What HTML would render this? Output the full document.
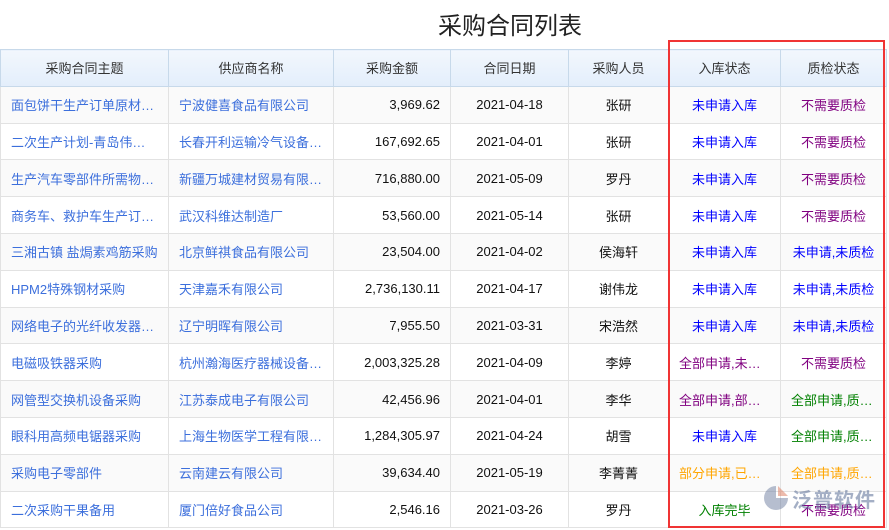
<!DOCTYPE html>
<html><head><meta charset="utf-8">
<style>
body{margin:0;width:889px;height:530px;background:#fff;font-family:"Liberation Sans","Noto Sans CJK SC",sans-serif;font-size:13px;position:relative;overflow:hidden}
h1{position:absolute;left:0;width:1020px;top:6px;margin:0;text-align:center;font-size:24px;font-weight:normal;color:#222}
table{position:absolute;left:0;top:49px;width:886px;border-collapse:collapse;table-layout:fixed}
td,th{height:35.8px;border:1px solid #e2e2e2;padding:0 10px;white-space:nowrap;overflow:hidden;text-overflow:ellipsis;text-align:center}
th{background:linear-gradient(#f2f7fd,#e3eefb);font-weight:normal;color:#333;border-color:#c7d9ea}
tr:nth-child(even) td{background:#fafafa}
td.l{text-align:left;color:#3c6fdc}
td.r{text-align:right}
td{color:#111}
.b{color:#0000ff!important}.p{color:#800080!important}.g{color:#008000!important}.o{color:#ffa500!important}
.box{position:absolute;left:668px;top:40px;width:213px;height:484px;border:2px solid #f03434}
.wm{position:absolute;left:792px;top:484px;font-size:20px;color:rgba(90,110,150,.55);font-weight:bold;letter-spacing:1px}
</style></head><body>
<h1>采购合同列表</h1>
<table>
<colgroup><col style="width:168px"><col style="width:165px"><col style="width:117px"><col style="width:118px"><col style="width:100px"><col style="width:112px"><col style="width:106px"></colgroup>
<tr><th>采购合同主题</th><th>供应商名称</th><th>采购金额</th><th>合同日期</th><th>采购人员</th><th>入库状态</th><th>质检状态</th></tr>
<tr><td class="l">面包饼干生产订单原材料采购</td><td class="l">宁波健喜食品有限公司</td><td class="r">3,969.62</td><td>2021-04-18</td><td>张研</td><td class="b">未申请入库</td><td class="p">不需要质检</td></tr>
<tr><td class="l">二次生产计划-青岛伟业采购</td><td class="l">长春开利运输冷气设备有限公司</td><td class="r">167,692.65</td><td>2021-04-01</td><td>张研</td><td class="b">未申请入库</td><td class="p">不需要质检</td></tr>
<tr><td class="l">生产汽车零部件所需物料采购</td><td class="l">新疆万城建材贸易有限公司</td><td class="r">716,880.00</td><td>2021-05-09</td><td>罗丹</td><td class="b">未申请入库</td><td class="p">不需要质检</td></tr>
<tr><td class="l">商务车、救护车生产订单采购</td><td class="l">武汉科维达制造厂</td><td class="r">53,560.00</td><td>2021-05-14</td><td>张研</td><td class="b">未申请入库</td><td class="p">不需要质检</td></tr>
<tr><td class="l">三湘古镇 盐焗素鸡筋采购</td><td class="l">北京鲜祺食品有限公司</td><td class="r">23,504.00</td><td>2021-04-02</td><td>侯海轩</td><td class="b">未申请入库</td><td class="b">未申请,未质检</td></tr>
<tr><td class="l">HPM2特殊钢材采购</td><td class="l">天津嘉禾有限公司</td><td class="r">2,736,130.11</td><td>2021-04-17</td><td>谢伟龙</td><td class="b">未申请入库</td><td class="b">未申请,未质检</td></tr>
<tr><td class="l">网络电子的光纤收发器采购</td><td class="l">辽宁明晖有限公司</td><td class="r">7,955.50</td><td>2021-03-31</td><td>宋浩然</td><td class="b">未申请入库</td><td class="b">未申请,未质检</td></tr>
<tr><td class="l">电磁吸铁器采购</td><td class="l">杭州瀚海医疗器械设备有限公司</td><td class="r">2,003,325.28</td><td>2021-04-09</td><td>李婷</td><td class="p">全部申请,未入库</td><td class="p">不需要质检</td></tr>
<tr><td class="l">网管型交换机设备采购</td><td class="l">江苏泰成电子有限公司</td><td class="r">42,456.96</td><td>2021-04-01</td><td>李华</td><td class="p">全部申请,部分入库</td><td class="g">全部申请,质检完毕</td></tr>
<tr><td class="l">眼科用高频电锯器采购</td><td class="l">上海生物医学工程有限公司</td><td class="r">1,284,305.97</td><td>2021-04-24</td><td>胡雪</td><td class="b">未申请入库</td><td class="g">全部申请,质检完毕</td></tr>
<tr><td class="l">采购电子零部件</td><td class="l">云南建云有限公司</td><td class="r">39,634.40</td><td>2021-05-19</td><td>李菁菁</td><td class="o">部分申请,已入库</td><td class="o">全部申请,质检中</td></tr>
<tr><td class="l">二次采购干果备用</td><td class="l">厦门倍好食品公司</td><td class="r">2,546.16</td><td>2021-03-26</td><td>罗丹</td><td class="g">入库完毕</td><td class="p">不需要质检</td></tr>
</table>
<div class="box"></div>
<svg style="position:absolute;left:762px;top:485px" width="28" height="26"><path d="M14 1 A12 12 0 1 0 26 13 L14 13 Z" fill="rgba(110,125,160,.5)"/><path d="M16 1 L26 11 L16 11Z" fill="rgba(220,120,90,.5)"/></svg>
<div class="wm">泛普软件</div>
</body></html>
